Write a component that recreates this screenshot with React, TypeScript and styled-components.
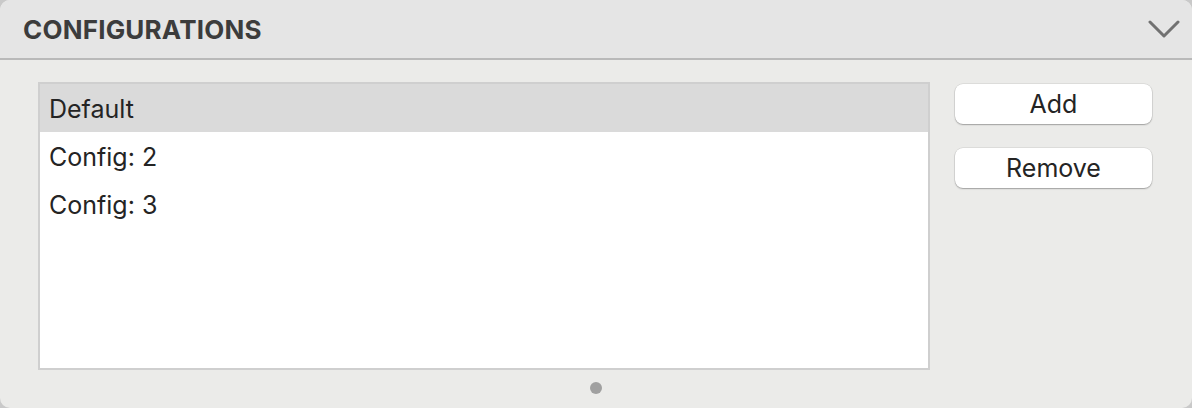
import React from "react";
import styled, { createGlobalStyle } from "styled-components";

const Global = createGlobalStyle`
  html, body { margin: 0; padding: 0; background: #c9c9c9; }
  body { font-family: Inter, "Liberation Sans", Arial, sans-serif; }
  * { box-sizing: border-box; }
`;

const Panel = styled.div`
  width: 1192px;
  height: 408px;
  background: #ebebe9;
  border-radius: 10px;
  overflow: hidden;
  display: flex;
  flex-direction: column;
`;

const Header = styled.div`
  height: 60px;
  flex: none;
  background: #e5e5e5;
  border-bottom: 2px solid #b9b9b9;
  display: flex;
  align-items: center;
  justify-content: space-between;
  padding: 0 12px 0 23px;
`;

const Title = styled.div`
  font-size: 26px;
  font-weight: 700;
  color: #3c3c3c;
  letter-spacing: 0.2px;
  padding-top: 1px;
`;

const Body = styled.div`
  flex: 1;
  display: flex;
  flex-direction: column;
  padding: 22px 0 0 38px;
`;

const Row = styled.div`
  display: flex;
  gap: 25px;
`;

const List = styled.div`
  width: 892px;
  height: 288px;
  background: #fff;
  border: 2px solid #cfcfcf;
  display: flex;
  flex-direction: column;
`;

const Item = styled.div<{ $selected?: boolean }>`
  height: 48px;
  flex: none;
  display: flex;
  align-items: center;
  padding-left: 9px;
  padding-top: 1px;
  font-size: 25px;
  color: #242424;
  background: ${(p) => (p.$selected ? "#dadada" : "transparent")};
`;

const Buttons = styled.div`
  display: flex;
  flex-direction: column;
  gap: 24px;
  padding-top: 2px;
`;

const Button = styled.button`
  width: 197px;
  height: 40px;
  border: none;
  border-radius: 8px;
  background: #fff;
  box-shadow: 0 0 0 0.5px rgba(0, 0, 0, 0.12), 0 1px 1.5px rgba(0, 0, 0, 0.28);
  font-family: inherit;
  font-size: 25px;
  color: #242424;
  padding: 0;
  cursor: default;
`;

const DotRow = styled.div`
  display: flex;
  justify-content: center;
  padding-top: 12px;
  margin-left: -38px;
`;

const Dot = styled.div`
  width: 12px;
  height: 12px;
  border-radius: 50%;
  background: #a0a0a0;
`;

const Chevron = () => (
  <svg width="32" height="20" viewBox="0 0 32 20">
    <path d="M2 3 L16 17 L30 3" fill="none" stroke="#717171" strokeWidth="3" strokeLinecap="round" strokeLinejoin="round" />
  </svg>
);

export default function App() {
  return (
    <>
      <Global />
      <Panel>
        <Header>
          <Title>CONFIGURATIONS</Title>
          <Chevron />
        </Header>
        <Body>
          <Row>
            <List>
              <Item $selected>Default</Item>
              <Item>Config: 2</Item>
              <Item>Config: 3</Item>
            </List>
            <Buttons>
              <Button>Add</Button>
              <Button>Remove</Button>
            </Buttons>
          </Row>
          <DotRow>
            <Dot />
          </DotRow>
        </Body>
      </Panel>
    </>
  );
}
